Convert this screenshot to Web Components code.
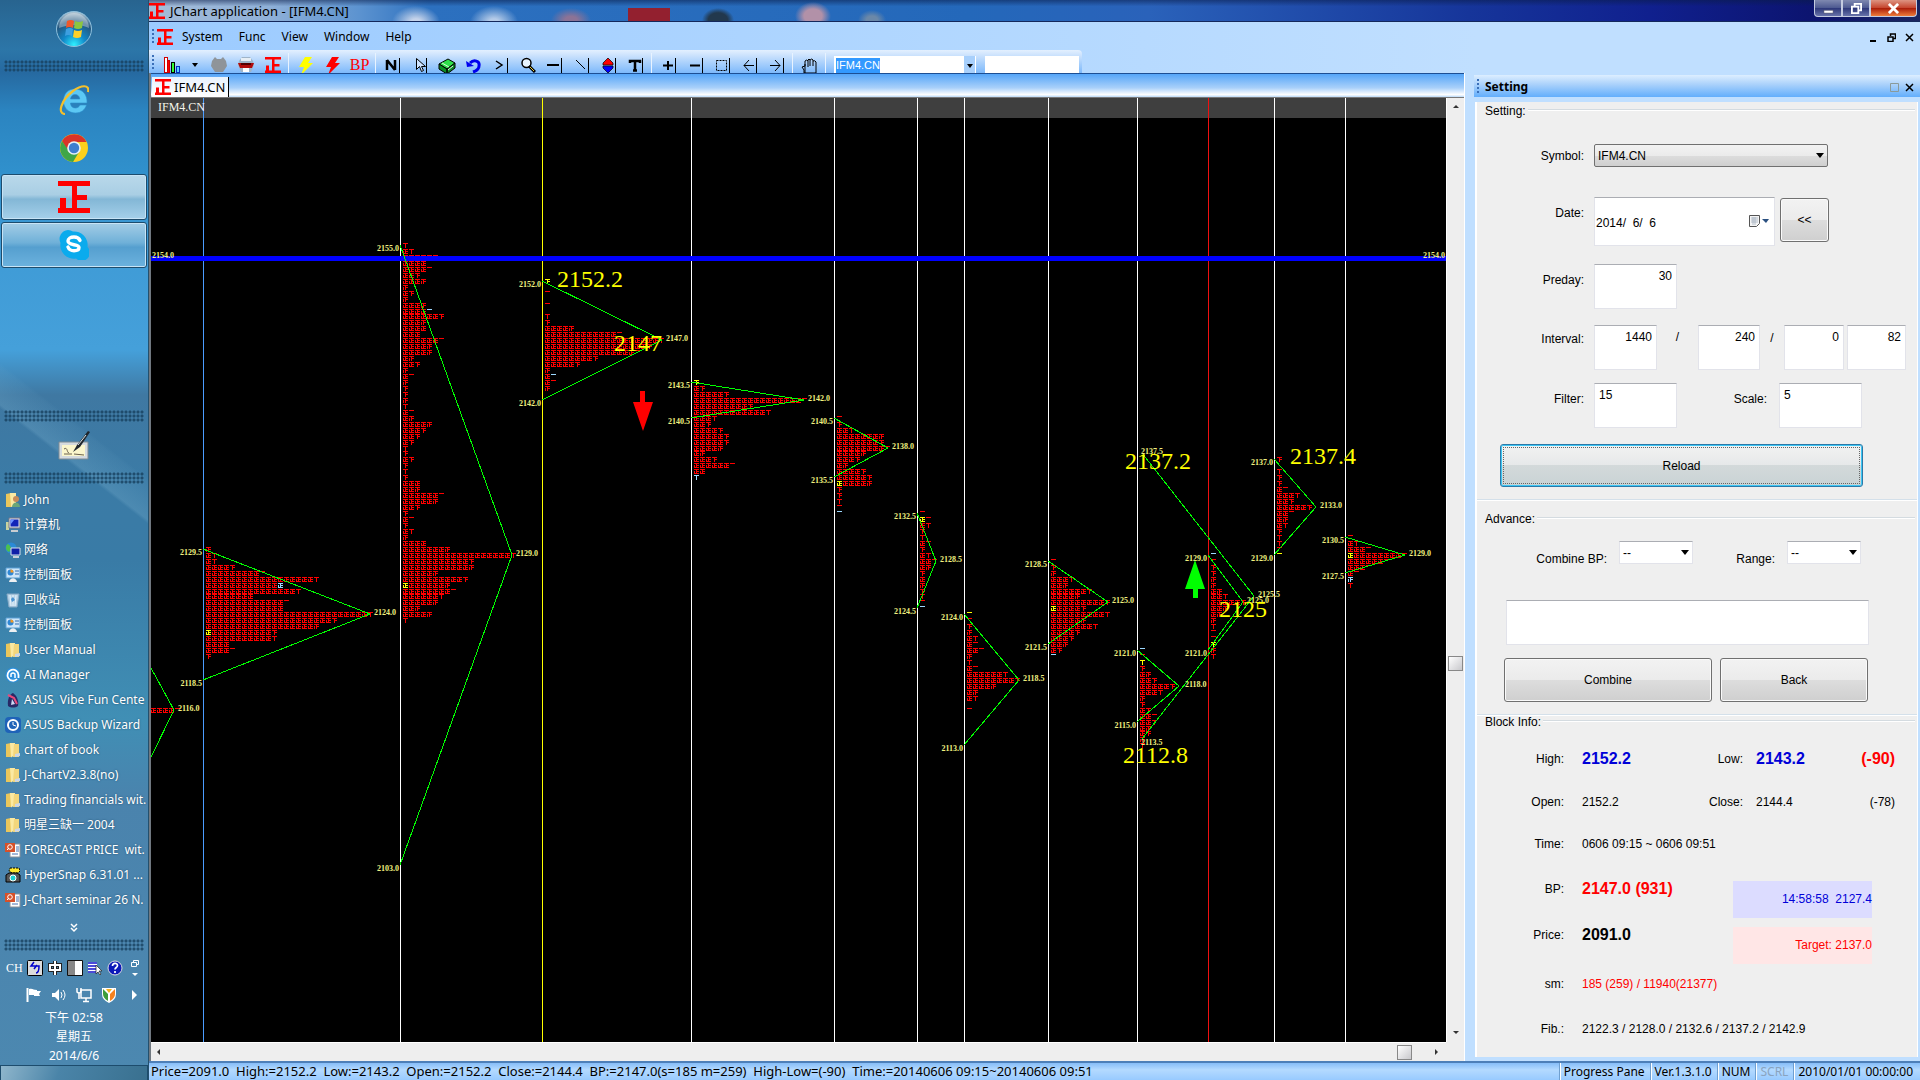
<!DOCTYPE html>
<html lang="en">
<head>
<meta charset="utf-8">
<title>JChart application - [IFM4.CN]</title>
<style>
  html, body {
    height: 100%;
    margin: 0;
  }

  body {
    display: grid;
    grid-template-columns: 149px minmax(0, 1fr);
    overflow: hidden;
    background: #c0dfff;
    font: 12px/18px "Noto Sans", "Noto Sans CJK SC", sans-serif;
    color: #000;
  }
</style>
</head>
<body>
<jc-taskbar></jc-taskbar>
<jc-window></jc-window>

<script>
/* ---------- icons ---------- */

const ZHENG = '<path d="M0 0h32v5H19v9h10v5H19v8h13v5H0v-5h2V17h6v10h6V5H0z" fill="#f00"/>';

// key tool buttons share the same raised black edge on the right and bottom
const KEY = '<path d="M15 1v15H2" fill="none" stroke="#000" shape-rendering="crispEdges"/>';

const ICONS = {
  zheng: ['0 0 32 32', ZHENG],
  orb: ['0 0 36 36', `
    <defs><radialGradient id="o" cx=".5" cy=".95" r=".95">
      <stop offset="0" stop-color="#2ff0ff"/><stop offset=".35" stop-color="#1187c8"/>
      <stop offset=".7" stop-color="#24577f"/><stop offset="1" stop-color="#b8cbd8"/></radialGradient></defs>
    <circle cx="18" cy="18" r="17.5" fill="url(#o)" stroke="#8fc0dd"/>
    <path d="M3 17a15 15 0 0 1 30 0c-8 -4 -20 -4 -30 0z" fill="#fff" opacity=".35"/>
    <path d="M11 10q4 -2 7 0l-1 7q-4 -2 -7 0z" fill="#f0582a"/>
    <path d="M19 10q4 2 8 0l-1 7q-4 2 -8 0z" fill="#8cc63e"/>
    <path d="M10 18q4 -2 7 0l-1 7q-4 -2 -7 0z" fill="#3d9fe0"/>
    <path d="M18 19q4 2 8 0l-1 7q-4 2 -8 0z" fill="#ffd029"/>`],
  ie: ['0 0 30 30', `
    <path d="M15.500 4C8.500 4 4.500 9 4.500 16s5 12 12 12c5.500 0 9.500 -3 11 -8h-6.500c-1 2 -2.500 3 -4.500 3 -3 0 -5 -2 -5 -5h16.500C28.500 10 24 4 15.500 4zm-4 10c.5 -3 2 -4.500 4.500 -4.500s4.500 1.500 4.800 4.500z" fill="#5cc8f4" stroke="#2c8dcb" stroke-width=".6"/>
    <path d="M6 29C-2 29 2 15 14 6 22 0 31 -1 29 7" fill="none" stroke="#f4c02c" stroke-width="2.200"/>`],
  chrome: ['0 0 30 30', `
    <circle cx="15" cy="15" r="14" fill="#fdd01c"/>
    <path d="M3 8A14 14 0 0 1 27.500 9H15L9 18z" fill="#db3328"/>
    <path d="M3 8A14 14 0 0 0 14 29l6 -10 -10 -1z" fill="#3fa648"/>
    <circle cx="15" cy="15" r="6.800" fill="#e9f1f8"/><circle cx="15" cy="15" r="5.200" fill="#3f7fd0"/>`],
  skype: ['0 0 30 30', `
    <path d="M9 0a9 9 0 0 1 5 1.500A13.500 13.500 0 0 1 28.500 17 8 8 0 0 1 17 28.500 13.500 13.500 0 0 1 1.500 13 9 9 0 0 1 9 0z" fill="#0aabed"/>
    <path d="M21 10.500C20 8 18 7 15 7c-3.500 0 -6 1.500 -6 4 0 5 11 2.500 11 6.500 0 2 -2 3.200 -5 3.200 -3 0 -5 -1 -6 -3.700" fill="none" stroke="#fff" stroke-width="3.400" stroke-linecap="round"/>`],
  tablet: ['0 0 32 30', `
    <path d="M1 12h29v17H1z" fill="#d5dade" stroke="#7e8b94"/><path d="M4 15h23v11H4z" fill="#fbf6cc"/>
    <path d="M6 19c4 -3 3 6 5 3M16 24l10 1M6 24h8" fill="none" stroke="#6b604c"/>
    <path d="M15 22l4 -7L30 1l2 1 -10 15z" fill="#20262c"/><path d="M20 15l8 -10" stroke="#dfe6ea"/>`],
  folder: ['0 0 16 16', `
    <path d="M1 2l5 -1v14H1z" fill="#e9c65c"/><path d="M5 1h5v12l-4 2.500z" fill="#fbe9a2"/>
    <path d="M9 2h5v13H8z" fill="#f3d67b"/><path d="M10 12l5 -1v3l-5 1z" fill="#c9d6ea"/>`],
  user: ['0 0 16 16', `
    <path d="M1 2l5 -1v14H1z" fill="#e9c65c"/><path d="M5 1h6v13l-5 1z" fill="#fbe9a2"/>
    <circle cx="11" cy="7" r="3" fill="#c98b58"/><path d="M7 15c0 -6 8 -6 8 0z" fill="#6aa678"/>`],
  computer: ['0 0 16 16', `
    <path d="M1 5h3v8H1z" fill="#c8d3a0"/><path d="M4 1h11v10H4z" fill="#dfe6ec" stroke="#778"/>
    <path d="M5.500 2.500h8v7h-8z" fill="#1325b8"/><path d="M5.500 2.500h4l-4 5z" fill="#6e93ff"/><path d="M6 13h7v2H6z" fill="#c8ccd0"/>`],
  network: ['0 0 16 16', `
    <circle cx="6" cy="6" r="5.500" fill="#2a8ad6"/><path d="M3 2c3 2 4 5 1 8C0 8 0 4 3 2z" fill="#4dc04d"/>
    <path d="M6 6h9v7H6z" fill="#1020a8" stroke="#d8e2ee"/><path d="M8 14h6v2H8z" fill="#c8d0da"/>`],
  panel: ['0 0 16 16', `
    <path d="M1 1h14v10H1z" fill="#cfe6f8" stroke="#5b9fd4"/><circle cx="5.500" cy="5.500" r="3" fill="#2f87d6"/>
    <path d="M5.500 5.500V2.500a3 3 0 0 1 3 3z" fill="#f59a23"/><path d="M10 4h4M10 7h4" stroke="#2f6fb5"/>
    <path d="M4 15c1 -5 7 -5 8 0z" fill="#eef0f2"/>`],
  bin: ['0 0 16 16', `
    <path d="M2 2h12l-2 13H4z" fill="#b7d3e8" stroke="#87a9c4"/><path d="M5 3l1 11M8 3v11M11 3l-1 11" stroke="#e8f3fa"/>
    <path d="M6 7l2 -2 2 3 -3 2z" fill="#4a92d0"/>`],
  swirl: ['0 0 16 16', `
    <circle cx="8" cy="8" r="7.500" fill="#2c8fdc"/><path d="M12 12A5.500 5.500 0 1 1 13.500 8v3" fill="none" stroke="#fff" stroke-width="1.800"/>
    <path d="M6 10V7q2 -2 4 0v4" fill="none" stroke="#fff" stroke-width="1.500"/>`],
  vibe: ['0 0 16 16', `
    <path d="M3 14C2 7 5 2 8 1c4 3 6 8 5 13 -3 2 -7 2 -10 0z" fill="#282a66"/>
    <path d="M3 3l6 3 3 6" fill="none" stroke="#e84a7c" stroke-width="2"/><path d="M6 13l1 -6 3 5z" fill="#cfd8f4"/>`],
  backup: ['0 0 16 16', `
    <rect width="16" height="16" rx="4" fill="#1f63b8"/><circle cx="8" cy="8" r="5" fill="none" stroke="#fff" stroke-width="2"/>
    <path d="M8 5v3l3 1" fill="none" stroke="#fff"/>`],
  ppt: ['0 0 16 16', `
    <path d="M5 2h10v13H5z" fill="#fff" stroke="#8a9099"/><path d="M7 12h6M11 5h3M11 7h3M11 9h3" stroke="#4670b0"/>
    <path d="M0 1h10v9H0z" fill="#d6512a"/><circle cx="5" cy="5" r="2.300" fill="none" stroke="#fff"/><path d="M2 8l2 -2" stroke="#fff"/>`],
  camera: ['0 0 16 16', `
    <path d="M5 1h9l1 3 -2 2H7L4 4z" fill="#ffe92e" stroke="#000" stroke-dasharray="2 1"/>
    <path d="M1 8l3 -2h8l3 2v7H1z" fill="#555" stroke="#000"/><circle cx="8" cy="11" r="3" fill="#20d0d0" stroke="#fff"/>`],
  chevrons: ['0 0 8 10', '<path d="M1 1l3 3 3 -3M1 5l3 3 3 -3" fill="none" stroke="#fff" stroke-width="1.500"/>'],
  imeA: ['0 0 16 16', `
    <rect x=".5" y=".5" width="15" height="15" rx="1" fill="#dcdcdc" stroke="#000"/>
    <path d="M7 2L4 6h8c0 4 -1 7 -3 7M10 5L7 9" fill="none" stroke="#00c" stroke-width="1.500"/>`],
  imeZhong: ['0 0 16 16', '<path d="M8 1v14M3 5h10v5H3z" fill="none" stroke="#222" stroke-width="4"/><path d="M8 1v14M3 5h10v5H3z" fill="none" stroke="#fff" stroke-width="2"/>'],
  imeHalf: ['0 0 16 16', '<path d="M.5 .5h15v15H.5z" fill="#fff" stroke="#111"/><path d="M1 1h7v14H1z" fill="#888"/>'],
  imeMenu: ['0 0 16 16', '<path d="M1 2h9v11H1z" fill="#fff"/><path d="M1 3h9M1 6h8M1 9h8M1 12h8" stroke="#11c" stroke-width="1.500"/><path d="M9 5v9l2 -2 2 3 1 -1 -2 -3h3z" fill="#fff" stroke="#222" stroke-width=".7"/>'],
  help: ['0 0 16 16', '<circle cx="8" cy="8" r="7" fill="#0c18b8" stroke="#d8d8e0"/><path d="M5.500 6c0 -3.500 5 -3.500 5 -.5 0 2 -2.500 2 -2.500 4M8 11v2" fill="none" stroke="#fff" stroke-width="1.700"/>'],
  restoreBar: ['0 0 8 16', '<path d="M2.500 3V.5h5v4H6M.5 2.500h5v4h-5z" fill="none" stroke="#fff"/><path d="M1 13h6l-3 3z" fill="#fff"/>'],
  flag: ['0 0 16 16', '<path d="M1.500 1v14" stroke="#fff" stroke-width="2"/><path d="M3 2c4 -1 4 1 8 1v1h4l-2 3 1 2h-6V8H3z" fill="#fff"/>'],
  speaker: ['0 0 16 16', '<path d="M1 6h3l4 -4v12l-4 -4H1z" fill="#fff"/><path d="M10 5q2 3 0 6M12 3q4 5 0 10" fill="none" stroke="#fff"/>'],
  net: ['0 0 16 16', '<path d="M5 3h10v8H5zM10 11v4M7 14.500h6" fill="none" stroke="#fff" stroke-width="1.500"/><path d="M1 1v4q2 2 4 0V1M3 6v6" fill="none" stroke="#fff" stroke-width="1.500"/>'],
  shield: ['0 0 16 16', '<path d="M1 1h14v6q0 6 -7 9 -7 -3 -7 -9z" fill="#fff"/><path d="M2 2l5 5v7Q2 11 2 7z" fill="#3d9d3a"/><path d="M14 2L9 7v7q5 -3 5 -7z" fill="#f58220"/><path d="M5 2h6L8 6z" fill="#f7b21c"/>'],
  arrowR: ['0 0 8 10', '<path d="M2 0v10l5 -5z" fill="#fff"/>'],

  bars: ['0 0 18 16', `<g fill="#fff" stroke="#000" shape-rendering="crispEdges"><path d="M1.500 .5h3v15h-3z" stroke="#d00000"/>
    <path d="M4.500 3.500h2v12h-2z" fill="#f00" stroke="#d00000"/><path d="M8.500 5.500h3v10h-3z" fill="#3f3"/><path d="M13.500 9.500h3v6h-3z" fill="#5cf" stroke="#0030c0"/></g>`],
  caret: ['0 0 8 8', '<path d="M1 3h6L4 7z" fill="#000"/>'],
  ball: ['0 0 16 16', '<path d="M4 0l2 2h4l2 -2 3 4 1 5 -4 6H4L0 9l1 -5z" fill="#8f9499"/>'],
  redball: ['0 0 16 16', '<path d="M4 0h8l3 4 1 4 -3 7H3L0 8l1 -4z" fill="#9fb4c8"/><path d="M3 1h10v3H3z" fill="#e6eef5"/><path d="M0 6h16l-2 5H2z" fill="#b00c0c"/><path d="M5 11h6v4H5z" fill="#fff"/><path d="M3 7h10" stroke="#500" stroke-width="2"/>'],
  boltY: ['0 0 16 18', '<path d="M7 0h7l-4 6h5L3 18l3 -8H1z" fill="#ff0"/>'],
  boltR: ['0 0 16 18', '<path d="M7 0h7l-4 6h5L3 18l3 -8H1z" fill="#f00"/>'],
  keyN: ['0 0 17 17', KEY + '<path d="M3 13V3M11 13V3M3 3l8 10" stroke="#000" stroke-width="2.500" fill="none"/>'],
  keyCursor: ['0 0 17 17', KEY + '<path d="M5.500 1.500v11l3 -3 2 5 2 -1 -2 -4h4z" fill="#cfe4ff" stroke="#000"/>'],
  cube: ['0 0 18 18', '<path d="M1 7l9 -5 7 4 -8 6z" fill="#2fe04a" stroke="#000"/><path d="M1 7l8 5v5l-8 -5zM9 12l8 -6v5l-8 6z" fill="#0d8c25" stroke="#000"/><path d="M4 6l7 4M10 13l5 -4" stroke="#d8ffd8"/>'],
  undo: ['0 0 16 16', '<path d="M4 6c4 -4 10 -2 9 3 0 3 -3 5 -6 6" fill="none" stroke="#00e" stroke-width="3"/><path d="M0 4l8 5 -7 1z" fill="#00e"/>'],
  keyGt: ['0 0 17 17', KEY + '<path d="M4 4l6 4 -6 4" fill="none" stroke="#000" stroke-width="1.500"/>'],
  magnifier: ['0 0 16 16', '<circle cx="6.500" cy="6" r="4.500" fill="#e8f4ff" stroke="#000" stroke-width="1.500"/><path d="M9 9l6 6" stroke="#000" stroke-width="3"/><path d="M10 10l4 4" stroke="#e8d040"/>'],
  keyLine: ['0 0 17 17', KEY + '<path d="M1 8h12" stroke="#000" stroke-width="2"/>'],
  keyDiag: ['0 0 17 17', KEY + '<path d="M3 3l9 9" stroke="#000"/>'],
  keyUpDown: ['0 0 17 17', KEY + '<path d="M8 1l5 5v2H3V6z" fill="#f00" stroke="#000" stroke-width=".7"/><path d="M8 16l5 -5V9H3v2z" fill="#00f" stroke="#000" stroke-width=".7"/>'],
  keyT: ['0 0 17 17', KEY + '<path d="M3 6V4h10v2M8 4v10M6 13.500h4" fill="none" stroke="#000" stroke-width="2.500"/>'],
  keyPlus: ['0 0 17 17', KEY + '<path d="M3 8.500h10M8 4v9" stroke="#000" stroke-width="2"/>'],
  keyMinus: ['0 0 17 17', KEY + '<path d="M3 8.500h10" stroke="#000" stroke-width="2"/>'],
  keyDotted: ['0 0 17 17', KEY + '<path d="M2.500 3.500h10v10h-10z" fill="none" stroke="#000" stroke-dasharray="2 1"/>'],
  keyLeft: ['0 0 17 17', KEY + '<path d="M13 8.500H3M8 3L3 8.500 8 14" fill="none" stroke="#000"/>'],
  keyRight: ['0 0 17 17', KEY + '<path d="M2 8.500h10M7 3l5 5.500L7 14" fill="none" stroke="#000"/>'],
  hand: ['0 0 17 17', '<path d="M4 16V7M7 10V3q1 -2 2 0v6M9 3q2 -2 3 0v6M12 4q2 -1 3 1v11H3v-3l-2 -3 3 -1V4q2 -2 3 0M6 16" fill="none" stroke="#000"/>'],
  minimize: ['0 0 12 12', '<path d="M1 8h10v3H1z" fill="#fff" stroke="#445" stroke-width=".5"/>'],
  restore: ['0 0 12 12', '<path d="M4 3V1h7v7H9M1 4h7v7H1z" fill="none" stroke="#fff" stroke-width="2"/>'],
  close: ['0 0 12 12', '<path d="M1 1l10 10M11 1L1 11" stroke="#fff" stroke-width="3"/>'],
  mdiMin: ['0 0 9 9', '<path d="M1 7h6v2H1z"/>'],
  mdiRestore: ['0 0 9 9', '<path d="M3.500 3V1h5v4.500H6M1 4h5v4.500H1z" fill="none" stroke="#000" stroke-width="1.500"/>'],
  mdiClose: ['0 0 9 9', '<path d="M1 1l7 7M8 1L1 8" stroke="#000" stroke-width="1.500"/>'],
  pin: ['0 0 9 9', '<path d="M.5 .5h8v8h-8z" fill="none" stroke="#8a9a9a"/>'],
  calendar: ['0 0 20 12', '<path d="M.5 .5h10v8l-3 3h-7z" fill="#f4f4f4" stroke="#555"/><path d="M2 3h7M2 5h7M2 7h7M4 2v8M6 2v8" stroke="#9aa8b8" stroke-width=".7"/><path d="M13 4h7l-3 4z" fill="#2a5080"/>'],
};

class JcIcon extends HTMLElement {
  constructor() {
    super();
    this.attachShadow({ mode: 'open' });
  }

  connectedCallback() {
    const [box, body] = ICONS[this.getAttribute('name')];
    const [, , w, h] = box.split(' ');
    const size = Number(this.getAttribute('size')) || Number(w);
    this.shadowRoot.innerHTML = `
      <style>
        :host { display: inline-flex; flex: none; }
        svg { display: block; }
      </style>
      <svg width="${size}" height="${Math.round(size * h / w)}" viewBox="${box}" aria-hidden="true">${body}</svg>`;
  }
}
customElements.define('jc-icon', JcIcon);

/* ---------- helper for static components ---------- */

function define(name, html) {
  const template = document.createElement('template');
  template.innerHTML = html;
  customElements.define(name, class extends HTMLElement {
    constructor() {
      super();
      this.attachShadow({ mode: 'open' }).append(template.content.cloneNode(true));
    }
  });
}

/* ---------- desktop taskbar ---------- */

define('jc-task-link', `
  <style>
    :host { display: block; }
    a {
      display: flex;
      align-items: center;
      gap: 3px;
      height: 25px;
      padding-left: 5px;
      overflow: hidden;
      white-space: pre;
      color: #fff;
      text-decoration: none;
      text-shadow: 0 0 2px #1b4a6a;
    }
  </style>
  <a href="#"><slot name="icon"></slot><slot></slot></a>
`);

const LINKS = [
  ['user', 'John'], ['computer', '计算机'], ['network', '网络'], ['panel', '控制面板'],
  ['bin', '回收站'], ['panel', '控制面板'], ['folder', 'User Manual'], ['swirl', 'AI Manager'],
  ['vibe', 'ASUS  Vibe Fun Cente'], ['backup', 'ASUS Backup Wizard'], ['folder', 'chart of book'],
  ['folder', 'J-ChartV2.3.8(no)'], ['folder', 'Trading financials wit.'], ['folder', '明星三缺一 2004'],
  ['ppt', 'FORECAST PRICE  wit.'], ['camera', 'HyperSnap 6.31.01 ...'], ['ppt', 'J-Chart seminar 26 N.'],
];

define('jc-taskbar', `
  <style>
    :host {
      display: flex;
      flex-direction: column;
      min-width: 0;
      height: 100vh;
      overflow: hidden;
      box-sizing: border-box;
      border-right: 1px solid #23506e;
      color: #fff;
      background:
        linear-gradient(38deg, transparent 46%, #7db3d144 47%, #7db3d111 56%, transparent 57%) 0 300px / 149px 300px no-repeat,
        linear-gradient(#28648f 0, #2c76a8 50px, #2669a0 72px, #2b84c0 110px, #3090cc 170px,
          #3f9bd6 250px, #45a0da 350px, #3f78a2 395px, #3b7ba6 480px, #397ba6 560px, #408fb5 720px,
          #4a83ad 800px, #4c88b0 100%);
    }
    button {
      display: flex;
      align-items: center;
      justify-content: center;
      flex: none;
      padding: 0;
      border: 0;
      background: none;
    }
    .orb { height: 57px; margin-bottom: 3px; }
    .dots {
      flex: none;
      height: 12px;
      margin: 0 4px;
      background: radial-gradient(circle at 2px 2px, #17405ecc 1px, transparent 2px) 0 0 / 4px 4px;
    }
    .launch { height: 48px; }
    .dots + .launch { margin-top: 4px; }
    .running {
      height: 46px;
      margin: 0 1px 2px 1px;
      border: 1px solid #1d4c6d;
      border-radius: 3px;
      box-shadow: inset 0 0 0 1px #c8e4f6;
      background: linear-gradient(#a4cde6, #6fb0d8 45%, #559fcf 55%, #6cb2de);
    }
    .running.active { margin-top: 2px; background: linear-gradient(#b9d8ea, #a9cee4 45%, #83b7d6 55%, #a5d0ea); }
    .gap { height: 140px; flex: none; }
    .tablet { box-sizing: border-box; height: 50px; padding-bottom: 5px; }
    nav { padding-top: 3px; }
    .more { height: 27px; padding-top: 4px; }
    .tray {
      display: flex;
      align-items: center;
      flex: none;
    }
    .ime { height: 34px; gap: 4px; padding-left: 6px; font-family: "Liberation Serif", serif; }
    .ime jc-icon:last-child { margin-left: 4px; }
    .notify { height: 20px; gap: 9px; padding: 0 10px 0 26px; }
    .notify jc-icon:last-child { margin-left: auto; }
    .clock {
      padding-top: 3px;
      line-height: 19px;
      text-align: center;
    }
    .peek {
      height: 16px;
      margin-top: auto;
      border: 1px solid #1d4c6d;
      background: linear-gradient(110deg, #8fb6cc 0, #4a84a8 40%, #39708f 100%);
    }
  </style>
  <button class="orb" aria-label="Start"><jc-icon name="orb"></jc-icon></button>
  <div class="dots"></div>
  <button class="launch" aria-label="Internet Explorer"><jc-icon name="ie"></jc-icon></button>
  <button class="launch" aria-label="Chrome"><jc-icon name="chrome"></jc-icon></button>
  <button class="running active" aria-label="JChart"><jc-icon name="zheng"></jc-icon></button>
  <button class="running" aria-label="Skype"><jc-icon name="skype"></jc-icon></button>
  <div class="gap"></div>
  <div class="dots"></div>
  <button class="tablet" aria-label="Input panel"><jc-icon name="tablet"></jc-icon></button>
  <div class="dots"></div>
  <nav>${LINKS.map(([icon, text]) => `<jc-task-link><jc-icon slot="icon" name="${icon}"></jc-icon>${text}</jc-task-link>`).join('')}</nav>
  <button class="more" aria-label="More"><jc-icon name="chevrons"></jc-icon></button>
  <div class="dots"></div>
  <div class="tray ime"><span>CH</span><jc-icon name="imeA"></jc-icon><jc-icon name="imeZhong"></jc-icon><jc-icon name="imeHalf"></jc-icon><jc-icon name="imeMenu"></jc-icon><jc-icon name="help"></jc-icon><jc-icon name="restoreBar"></jc-icon></div>
  <div class="tray notify"><jc-icon name="flag"></jc-icon><jc-icon name="speaker"></jc-icon><jc-icon name="net"></jc-icon><jc-icon name="shield"></jc-icon><jc-icon name="arrowR"></jc-icon></div>
  <div class="clock">下午 02:58<br>星期五<br>2014/6/6</div>
  <button class="peek" aria-label="Show desktop"></button>
`);

/* ---------- title, menu, tool bar ---------- */

define('jc-titlebar', `
  <style>
    :host {
      display: flex;
      align-items: center;
      height: 21px;
      border-bottom: 1px solid #14285c;
      background:
        radial-gradient(ellipse 24px 16px at 267px 22px, #c5d3ea 20%, transparent) no-repeat,
        radial-gradient(ellipse 24px 16px at 345px 22px, #b5cbe8 20%, transparent) no-repeat,
        radial-gradient(ellipse 20px 12px at 422px 20px, #8c7396 30%, transparent) no-repeat,
        linear-gradient(#93202f, #93202f) 479px 8px / 42px 14px no-repeat,
        radial-gradient(ellipse 16px 12px at 569px 20px, #22384d 60%, transparent) no-repeat,
        radial-gradient(ellipse 18px 14px at 664px 16px, #b291a8 50%, transparent) no-repeat,
        radial-gradient(ellipse 14px 10px at 723px 20px, #6b88a8 40%, transparent) no-repeat,
        linear-gradient(#0a1c4888, transparent 30%),
        linear-gradient(90deg, #a5bdd8, #8fb0d8 120px, #5c93d0 210px, #2c70bf 280px, #2468ba 820px, #2a62ba 1000px, #16359a 1320px, #10208e 1500px, #0c1470 1660px, #1a2560 100%);
    }
    h1 {
      flex: 1;
      margin: 0 0 0 5px;
      font-size: 13px;
      font-weight: 400;
      line-height: 20px;
    }
    .buttons { display: flex; align-self: flex-start; margin-right: 3px; }
    button {
      display: flex;
      align-items: center;
      justify-content: center;
      width: 28px;
      height: 17px;
      padding: 0;
      border: 1px solid #c4cbe0;
      border-top: 0;
      background: linear-gradient(#7f89b0, #4c5890 50%, #2c3678 50%, #6873aa);
    }
    button:first-child { border-radius: 0 0 0 4px; }
    .close {
      width: 47px;
      border-radius: 0 0 4px 0;
      background: linear-gradient(#dd9482, #c5432c 50%, #a81a08 50%, #ef7c3a);
    }
  </style>
  <jc-icon name="zheng" size="16"></jc-icon>
  <h1><slot></slot></h1>
  <div class="buttons">
    <button aria-label="Minimize"><jc-icon name="minimize" size="11"></jc-icon></button>
    <button aria-label="Restore"><jc-icon name="restore" size="11"></jc-icon></button>
    <button class="close" aria-label="Close"><jc-icon name="close" size="11"></jc-icon></button>
  </div>
`);

define('jc-menubar', `
  <style>
    :host {
      display: flex;
      align-items: center;
      box-sizing: border-box;
      height: 28px;
      padding: 2px 2px 0 3px;
      background: linear-gradient(90deg, #9ccbff, #c0dfff 75%);
    }
    .grip { width: 2px; height: 16px; margin-right: 3px; background: repeating-linear-gradient(#3a6fb8 0 2px, transparent 2px 4px); }
    nav { display: flex; flex: 1; gap: 16px; margin-left: 9px; }
    a { color: #000; text-decoration: none; }
    button { display: flex; width: 18px; justify-content: center; padding: 0; border: 0; background: none; }
  </style>
  <div class="grip"></div>
  <jc-icon name="zheng" size="16"></jc-icon>
  <nav><a href="#">System</a><a href="#">Func</a><a href="#">View</a><a href="#">Window</a><a href="#">Help</a></nav>
  <button aria-label="Minimize document"><jc-icon name="mdiMin"></jc-icon></button>
  <button aria-label="Restore document"><jc-icon name="mdiRestore"></jc-icon></button>
  <button aria-label="Close document"><jc-icon name="mdiClose"></jc-icon></button>
`);

const TOOLS = ['bars', 'caret', 'ball', 'redball', 'zheng', '|', 'boltY', 'boltR', 'BP', '|',
  'keyN', 'keyCursor', 'cube', 'undo', 'keyGt', 'magnifier', 'keyLine', 'keyDiag', 'keyUpDown', 'keyT', '|',
  'keyPlus', 'keyMinus', 'keyDotted', 'keyLeft', 'keyRight', '|', 'hand', '|'];

function toolHtml(name) {
  if (name === '|') return '<i></i>';
  if (name === 'BP') return '<button class="bp">BP</button>';
  const size = name === 'zheng' ? ' size="16"' : '';
  return `<button class="${name}" aria-label="${name}"><jc-icon name="${name}"${size}></jc-icon></button>`;
}

define('jc-toolbar', `
  <style>
    :host { display: flex; height: 23px; background: linear-gradient(90deg, #9ccbff, #c0dfff 75%); }
    .bar {
      display: flex;
      align-items: flex-start;
      height: 23px;
      overflow: hidden;
      padding: 0 3px;
      background: linear-gradient(#e3f0ff, #cfe4fd 20%, #7db9fb);
      border-radius: 0 4px 0 0;
    }
    .grip { width: 2px; height: 16px; margin: 5px 4px 0 0; background: repeating-linear-gradient(#3a6fb8 0 2px, transparent 2px 4px); }
    button {
      display: flex;
      justify-content: center;
      flex: none;
      width: 27px;
      height: 23px;
      padding: 7px 0 0;
      border: 0;
      background: none;
    }
    .caret { width: 20px; padding-top: 10px; }
    .bp { padding-top: 6px; font: 16px/17px "Liberation Serif", serif; color: #f00; }
    i { flex: none; width: 1px; height: 20px; margin: 3px 3px 0 2px; background: #e8f3ff; }
    .combo { display: flex; width: 142px; margin: 6px 9px 0 5px; background: #fff; }
    input { box-sizing: border-box; height: 17px; padding: 0 2px; border: 0; font: inherit; }
    .text { display: flex; flex: 1; align-items: center; padding: 1px 0 0 2px; }
    .text input { width: 44px; padding: 0; height: 15px; background: #3399ff; color: #fff; font: 11px/15px "Liberation Sans", sans-serif; }
    .drop { width: 11px; height: 17px; padding: 5px 0 0; margin: 0 1px 0 0; background: #a8d0fc; }
    .free { width: 94px; margin: 6px 0 0; }
  </style>
  <div class="bar">
    <div class="grip"></div>
    ${TOOLS.map(toolHtml).join('')}
    <div class="combo">
      <div class="text"><input aria-label="Symbol code" value="IFM4.CN"></div>
      <button class="drop" aria-label="Symbols"><jc-icon name="caret"></jc-icon></button>
    </div>
    <input class="free" aria-label="Command">
  </div>
`);

/* ---------- chart ---------- */

const TOP = 2155;          // price of the first row
const ROW_TOP = 145;
const ROW_STEP = 5.957;    // one row is half a point
const CELL = 6;

const rowY = price => Math.round(ROW_TOP + (TOP - price) * 2 * ROW_STEP);

// The five tally strokes, in writing order, in a 5 x 5 cell
const STROKES = [
  (x, y) => `M${x} ${y}h5v1h-5z`,
  (x, y) => `M${x + 2} ${y}h1v5h-1z`,
  (x, y) => `M${x + 2} ${y + 2}h3v1h-3z`,
  (x, y) => `M${x} ${y + 2}h1v3h-1z`,
  (x, y) => `M${x} ${y + 4}h5v1h-5z`,
];

// x: grid line, price: first row, rows: strokes counted at each half point.
// "y" marks the opening cell, "b" the closing strokes.
const PROFILES = [
  { x: -3, color: null, price: 2116, rows: '21' },
  { x: 52, color: '#4a9cff', price: 2129.5, rows: '4 7 7 23 46 92 60b5 77 40 66 65 137 108 94 y58 57 20 21 3' },
  { x: 249, color: '#fff', price: 2155, rows: '2 7 26 20 21 13 19 4 8 4 19 20b1 33 19 20 15 31 24 24 9 13 4 6 4 3 3 4 2 6 9 24 18 13 8 2 3 8 3 2 3 15 14 31 29 13 3 6 3 7 4 20 39 92 58 59 29 53 y39 41 32 29 14 24 2' },
  { x: 391, color: '#ff0', price: 2152, rows: 'y3 0 1 0 1 0 2 3 24 61 97 88 76 43 28 4 5b1 6 4' },
  { x: 540, color: '#fff', price: 2143.5, rows: 'y3 8 28 91 48 62 17 13 23 28 28 24 9 18 31 10 0b2' },
  { x: 683, color: '#fff', price: 2140.5, rows: '1 3 12 39 38 41 24 18 9 23 28 y29 3 3 2 1 0b1' },
  { x: 766, color: '#fff', price: 2132.5, rows: '1 y6 7 3 2 6 3 7 11 9 3 5 4 3 2 1 0b1' },
  { x: 813, color: '#fff', price: 2124, rows: 'y1 1 3 4 7 6 11 4 2 6 32 43 24 9 7 0 1' },
  { x: 897, color: '#fff', price: 2128.5, rows: '1 3 4 17 14 32 24 48 y28 47 29 37 23 18 14 8 0b1' },
  { x: 986, color: '#fff', price: 2121, rows: '0b1 1 y2 3 9 13 28 17 4 3 8 11 12 9 8 4 2' },
  { x: 1057, color: '#f01010', price: 2129, rows: '0b1 1 3 3 4 4 9 12 28 14 9 4 2 1 1 y3 4 2' },
  { x: 1123, color: '#fff', price: 2137, rows: '3 0 2 3 3 6 17 13 28 11 9 7 3 2 2 1 y1' },
  { x: 1194, color: '#fff', price: 2130.5, rows: '1 7 16 y46 31 16 6 0b4 2' },
];

// [x, top price, apex x, apex price, bottom price]
const RANGES = [
  [0, 2119.5, 23, 2116, 2112],
  [52, 2129.5, 219, 2124, 2118.5],
  [249, 2155, 361, 2129, 2103],
  [391, 2152, 511, 2147, 2142],
  [540, 2143.5, 653, 2142, 2140.5],
  [683, 2140.5, 737, 2138, 2135.5],
  [766, 2132.5, 785, 2128.5, 2124.5],
  [813, 2124, 868, 2118.5, 2113],
  [897, 2128.5, 957, 2125, 2121.5],
  [986, 2121, 1028, 2118, 2115],
  [991, 2137.5, 1103, 2125.5, 2113.5],
  [1057, 2129, 1092, 2125, 2121],
  [1123, 2137, 1165, 2133, 2129],
  [1194, 2130.5, 1254, 2129, 2127.5],
];

const NOTES = [
  [406, 189, '2152.2'], [463, 253, '2147'], [974, 371, '2137.2'],
  [1139, 366, '2137.4'], [1068, 519, '2125'], [972, 665, '2112.8'],
];

function tally(x, y, from, to) {
  let d = '';
  for (let i = from; i < to; i++) {
    d += STROKES[i % 5](x + Math.floor(i / 5) * CELL, y);
  }
  return d;
}

class JcChart extends HTMLElement {
  constructor() {
    super();
    this.attachShadow({ mode: 'open' });
  }

  connectedCallback() {
    this.render();
  }

  marks() {
    const paths = { red: '', open: '', close: '' };
    for (const { x, price, rows } of PROFILES) {
      rows.split(' ').forEach((row, i) => {
        const [, open, count, close] = row.match(/^(y?)(\d+)(?:b(\d+))?$/);
        const n = Number(count);
        const y = rowY(price - i / 2);
        const first = open ? Math.min(5, n) : 0;
        paths.open += tally(x + 3, y, 0, first);
        paths.red += tally(x + 3, y, first, n);
        if (close) {
          paths.close += tally(x + 3 + Math.ceil(n / 5) * CELL, y, 0, Number(close));
        }
      });
    }
    return `<g shape-rendering="crispEdges">
      <path fill="#f00" d="${paths.red}"/><path fill="#ff0" d="${paths.open}"/><path fill="#9cd8ff" d="${paths.close}"/>
    </g>`;
  }

  labels() {
    return RANGES.map(([x, top, apexX, apex, bottom]) => {
      const side = x === 991 ? 'start' : 'end';
      const right = `<text x="${apexX + (apexX === 1028 ? 6 : 4)}" y="${rowY(apex) + 3}">${apex.toFixed(1)}</text>`;
      if (x === 0) return right;
      return right + [top, bottom].map((price, i) => {
        const drop = x === 991 && i === 0 ? 3 : 8;
        return `<text x="${x - 1}" y="${rowY(price) + drop}" text-anchor="${side}">${price.toFixed(1)}</text>`;
      }).join('');
    }).join('');
  }

  render() {
    const lines = PROFILES.filter(p => p.color)
      .map(p => `<line x1="${p.x}" x2="${p.x}" y1="0" y2="100%" stroke="${p.color}"/>`).join('');
    const ranges = RANGES
      .map(([x, top, ax, apex, bottom]) => `<polyline points="${x},${rowY(top) + 2} ${ax},${rowY(apex) + 2} ${x},${rowY(bottom) + 2}"/>`).join('');
    const notes = NOTES.map(([x, y, text]) => `<text x="${x}" y="${y}">${text}</text>`).join('');

    this.shadowRoot.innerHTML = `
      <style>
        :host { display: block; min-width: 0; min-height: 0; overflow: hidden; background: #000; }
        svg { display: block; width: 100%; height: 100%; font-family: "Liberation Serif", serif; }
        .name { font-size: 12px; fill: #f4f4ea; }
        .labels { font-size: 8px; font-weight: 700; fill: #f0f080; }
        .notes { font-size: 24px; fill: #ff0; }
        polyline { fill: none; stroke: #0f0; }
      </style>
      <svg role="img" aria-label="IFM4.CN">
        <rect width="100%" height="20" fill="#3f3f3f"/>
        <g shape-rendering="crispEdges">${lines}</g>
        <text class="name" x="7" y="13">IFM4.CN</text>
        ${this.marks()}
        <rect y="158" width="100%" height="5" fill="#00f"/>
        <g shape-rendering="crispEdges">${ranges}</g>
        <g class="labels">
          ${this.labels()}
          <text x="1" y="160">2154.0</text>
          <text x="100%" y="160" dx="-1" text-anchor="end">2154.0</text>
        </g>
        <path d="M489 293h5v11h8l-10 29 -10 -29h7z" fill="#f00"/>
        <path d="M1044 462l10 29h-7v9h-5v-9h-8z" fill="#0f0"/>
        <g class="notes">${notes}</g>
      </svg>
    `;
  }
}
customElements.define('jc-chart', JcChart);

/* ---------- document area ---------- */

define('jc-document', `
  <style>
    :host {
      display: grid;
      grid-template: 25px minmax(0, 1fr) 19px / minmax(0, 1fr) 18px;
      min-width: 0;
      box-sizing: border-box;
      border-left: 2px solid #707880;
      border-right: 1px solid #fff;
      background: #eee;
    }
    .tabs {
      grid-column: 1 / -1;
      display: flex;
      align-items: flex-end;
      border-top: 1px solid #1d4f94;
      border-bottom: 1px solid #777;
      padding: 2px 0 0 1px;
      background: linear-gradient(#55a5f8, #a9d0fa 60%, #fff 90%, #b8d8f8);
    }
    .tab {
      display: flex;
      align-items: center;
      gap: 3px;
      height: 20px;
      padding: 0 3px;
      border: 0;
      border-right: 1px solid #000;
      background: linear-gradient(#e8f2fd, #fff);
      font: inherit;
      font-size: 13px;
    }
    .vscroll, .hscroll { display: flex; align-items: center; }
    .vscroll { flex-direction: column; border-left: 1px solid #fff; }
    .hscroll { border-top: 1px solid #fff; }
    .thumb { flex: none; width: 15px; height: 15px; box-sizing: border-box; border: 1px solid #888; background: linear-gradient(135deg, #fff, #c8c8cc); }
    b { flex: none; border: 3px solid transparent; }
    .up { margin-top: 4px; border-bottom-color: #333; }
    .down { margin-bottom: 5px; border-top-color: #333; }
    .left { margin-left: 3px; border-right-color: #333; }
    .right { margin-right: 5px; border-left-color: #333; }
    .s1 { flex: 548; } .s2 { flex: 360; } .s3 { flex: 1232; } .s4 { flex: 23; }
  </style>
  <div class="tabs"><button class="tab"><jc-icon name="zheng" size="16"></jc-icon><slot name="tab"></slot></button></div>
  <slot></slot>
  <div class="vscroll"><b class="up"></b><div class="s1"></div><div class="thumb"></div><div class="s2"></div><b class="down"></b></div>
  <div class="hscroll"><b class="left"></b><div class="s3"></div><div class="thumb"></div><div class="s4"></div><b class="right"></b></div>
`);

/* ---------- settings dock ---------- */

define('jc-group', `
  <style>
    :host { display: block; }
    .legend {
      display: flex;
      align-items: center;
      gap: 2px;
      height: 18px;
      padding: 0 2px 0 8px;
    }
    .legend::after { content: ""; flex: 1; height: 1px; margin-bottom: 3px; background: #d4dbe0; border-bottom: 1px solid #fff; }
  </style>
  <div class="legend"><slot name="legend"></slot></div>
  <slot></slot>
`);

define('jc-settings', `
  <style>
    :host { display: flex; flex-direction: column; padding: 2px 0 4px 9px; min-width: 0; }
    header {
      display: flex;
      align-items: center;
      flex: none;
      box-sizing: border-box;
      gap: 6px;
      height: 22px;
      padding: 2px 6px 0 3px;
      background: linear-gradient(#ddeeff, #a8d0fb 45%, #62aefc);
    }
    header i { width: 2px; height: 16px; background: repeating-linear-gradient(#3a6fb8 0 2px, transparent 2px 4px); }
    h2 { flex: 1; margin: 0; font-size: 12px; line-height: 18px; }
    header button { display: flex; padding: 0; border: 0; box-shadow: none; background: none; height: auto; }
    form {
      flex: 1;
      min-height: 0;
      margin: 5px 2px 0 1px;
      border-left: 2px solid #fff;
      border-right: 1px solid #fff;
      background: #efefef;
      font: 12px/16px "Liberation Sans", Arial, sans-serif;
    }
    .row { display: flex; gap: 8px; }
    .row > label, .row > span { display: flex; align-items: center; }
    .row > label:first-child { flex: none; box-sizing: border-box; justify-content: flex-end; width: 109px; padding-right: 2px; }
    input, textarea {
      box-sizing: border-box;
      height: 45px;
      padding: 0 4px 21px;
      border: 1px solid #e2e3ea;
      border-top-color: #abadb3;
      background: #fff;
      font: inherit;
    }
    .num { text-align: right; }
    select {
      appearance: none;
      box-sizing: border-box;
      width: 100%;
      height: 23px;
      padding: 0 3px;
      border: 1px solid #e2e3ea;
      border-top-color: #abadb3;
      background: #fff;
      font: inherit;
      color: #000;
    }
    .pick { position: relative; width: 74px; }
    .pick::after {
      content: "";
      position: absolute;
      top: 9px;
      right: 4px;
      border: 4px solid transparent;
      border-top: 5px solid #000;
      border-bottom: 0;
    }
    .symbol { width: 234px; }
    .symbol select { border: 1px solid #707070; border-radius: 2px; background: linear-gradient(#f2f2f2, #ebebeb 50%, #ddd 50%, #cfcfcf); }
    .date { position: relative; width: 181px; }
    .date input { width: 100%; height: 49px; padding: 2px 1px 0; white-space: pre; }
    .date jc-icon { position: absolute; right: 6px; top: 18px; }
    button {
      box-sizing: border-box;
      height: 44px;
      padding: 0;
      border: 1px solid #707070;
      border-radius: 3px;
      box-shadow: inset 0 0 0 1px #fafafa;
      background: linear-gradient(#f2f2f2, #ebebeb 50%, #ddd 50%, #cfcfcf);
      font: inherit;
    }
    .reload {
      display: block;
      width: 363px;
      height: 43px;
      border: 1px solid #2c79a8;
      box-shadow: inset 0 0 0 1px #3cc6f4;
      outline: 1px dotted #666;
      outline-offset: -4px;
      background: linear-gradient(#f2f2f2, #e6e8e9 50%, #d3d9da 50%, #c9d3d5);
    }
    hr { height: 1px; margin: 0; border: 0; background: #d4e0ea; border-bottom: 1px solid #fff; }
    .info {
      display: grid;
      grid-template-columns: 87px 141px 38px 94px 58px;
      grid-template-rows: 44px 42px 42px 48px 44px 54px 36px;
      align-items: center;
      margin: 6px 0 0;
      white-space: pre;
    }
    .info dt { grid-column: 1; text-align: right; margin: 0; }
    .info dd { grid-column: 2; margin: 0; padding-left: 18px; }
    .info dt.second { grid-column: 3; }
    .info dd.second { grid-column: 4; padding-left: 13px; }
    .info dd.diff { grid-column: 5; padding: 0; text-align: right; }
    .strong { font-size: 16px; font-weight: 700; }
    .blue { color: #0000d8; }
    .red { color: #f00; }
    .quotes {
      grid-area: 4 / 3 / 7 / 6;
      align-self: start;
      display: grid;
      gap: 9px;
      width: 139px;
      margin: 16px 0 0 28px;
      line-height: 37px;
      text-align: right;
    }
    .quotes div:first-child { background: #dcdcff; color: #0000d8; }
    .quotes div:last-child { background: #ffe6e6; color: #f00; }
  </style>
  <header>
    <i></i><h2>Setting</h2>
    <button aria-label="Maximize pane"><jc-icon name="pin"></jc-icon></button>
    <button aria-label="Close pane"><jc-icon name="mdiClose"></jc-icon></button>
  </header>
  <form>
    <jc-group>
      <span slot="legend">Setting:</span>
      <div class="row" style="margin-top:24px">
        <label for="symbol">Symbol:</label>
        <div class="pick symbol"><select id="symbol"><option>IFM4.CN</option></select></div>
      </div>
      <div class="row" style="margin-top:30px">
        <label for="date" style="padding-bottom:18px">Date:</label>
        <div class="date"><input id="date" value="2014/  6/  6"><jc-icon name="calendar"></jc-icon></div>
        <button type="button" style="width:49px;margin:1px 0 0 -3px">&lt;&lt;</button>
      </div>
      <div class="row" style="margin-top:18px">
        <label for="preday" style="height:32px">Preday:</label>
        <input id="preday" class="num" style="width:83px" value="30">
      </div>
      <div class="row" style="margin-top:16px;height:45px">
        <label for="interval" style="height:28px">Interval:</label>
        <input id="interval" class="num" style="width:63px" value="1440">
        <span style="width:25px;height:24px;justify-content:center">/</span>
        <input aria-label="Interval minutes" class="num" style="width:62px" value="240">
        <span style="width:8px;height:26px;justify-content:center">/</span>
        <input aria-label="Interval from" class="num" style="width:60px" value="0">
        <input aria-label="Interval to" class="num" style="width:59px;margin-left:-5px" value="82">
      </div>
      <div class="row" style="margin-top:13px">
        <label for="filter" style="height:32px">Filter:</label>
        <input id="filter" style="width:83px" value="15">
        <label for="scale" style="box-sizing:border-box;width:86px;height:32px;padding-right:4px;justify-content:flex-end">Scale:</label>
        <input id="scale" style="width:83px" value="5">
      </div>
      <button type="button" class="reload" style="margin:16px 0 12px 23px">Reload</button>
    </jc-group>
    <hr>
    <jc-group style="margin-top:9px">
      <span slot="legend">Advance:</span>
      <div class="row" style="margin-top:13px;gap:12px">
        <label for="combine-bp" style="width:130px;padding:10px 0 0">Combine BP:</label>
        <div class="pick"><select id="combine-bp"><option>--</option></select></div>
        <label for="range" style="width:70px;padding-top:10px;justify-content:flex-end">Range:</label>
        <div class="pick"><select id="range"><option>--</option></select></div>
      </div>
      <textarea aria-label="Combine result" style="display:block;width:363px;margin:33px 0 13px 29px;resize:none"></textarea>
      <div class="row" style="margin-left:27px">
        <button type="button" style="width:208px">Combine</button>
        <button type="button" style="width:148px">Back</button>
      </div>
    </jc-group>
    <hr style="margin-top:12px">
    <jc-group style="margin-top:-3px">
      <span slot="legend">Block Info:</span>
      <dl class="info">
        <dt>High:</dt><dd class="strong blue">2152.2</dd>
        <dt class="second">Low:</dt><dd class="second strong blue">2143.2</dd><dd class="diff strong red">(-90)</dd>
        <dt>Open:</dt><dd>2152.2</dd>
        <dt class="second">Close:</dt><dd class="second">2144.4</dd><dd class="diff">(-78)</dd>
        <dt>Time:</dt><dd>0606 09:15 ~ 0606 09:51</dd>
        <dt>BP:</dt><dd class="strong red">2147.0 (931)</dd>
        <dt>Price:</dt><dd class="strong">2091.0</dd>
        <dt>sm:</dt><dd class="red">185 (259) / 11940(21377)</dd>
        <dt>Fib.:</dt><dd>2122.3 / 2128.0 / 2132.6 / 2137.2 / 2142.9</dd>
        <div class="quotes"><div>14:58:58  2127.4</div><div>Target: 2137.0</div></div>
      </dl>
    </jc-group>
  </form>
`);

/* ---------- status bar ---------- */

define('jc-statusbar', `
  <style>
    :host {
      display: flex;
      box-sizing: border-box;
      height: 19px;
      border-top: 2px solid #4d7fb8;
      padding: 0 2px;
      white-space: pre;
      line-height: 17px;
      background: linear-gradient(#86bdf8, #b4daff 40%, #98caff);
    }
    .main { flex: 1; overflow: hidden; font-size: 13px; }
    .cell { padding: 0 5px 0 4px; border-left: 1px solid #6f9fd0; box-shadow: inset 1px 0 #fff; }
    .off { color: #8aa4bf; }
  </style>
  <div class="main">Price=2091.0  High:=2152.2  Low:=2143.2  Open:=2152.2  Close:=2144.4  BP:=2147.0(s=185 m=259)  High-Low=(-90)  Time:=20140606 09:15~20140606 09:51</div>
  <div class="cell">Progress Pane</div>
  <div class="cell">Ver.1.3.1.0</div>
  <div class="cell">NUM</div>
  <div class="cell off">SCRL</div>
  <div class="cell">2010/01/01 00:00:00</div>
`);

/* ---------- application window ---------- */

define('jc-window', `
  <style>
    :host {
      display: grid;
      grid-template-rows: auto auto auto minmax(0, 1fr) auto;
      min-width: 0;
      height: 100vh;
    }
    main { display: grid; grid-template-columns: minmax(0, 1fr) 455px; min-height: 0; }
  </style>
  <jc-titlebar>JChart application - [IFM4.CN]</jc-titlebar>
  <jc-menubar></jc-menubar>
  <jc-toolbar></jc-toolbar>
  <main>
    <jc-document><span slot="tab">IFM4.CN</span><jc-chart></jc-chart></jc-document>
    <jc-settings></jc-settings>
  </main>
  <jc-statusbar></jc-statusbar>
`);
</script>
</body>
</html>
